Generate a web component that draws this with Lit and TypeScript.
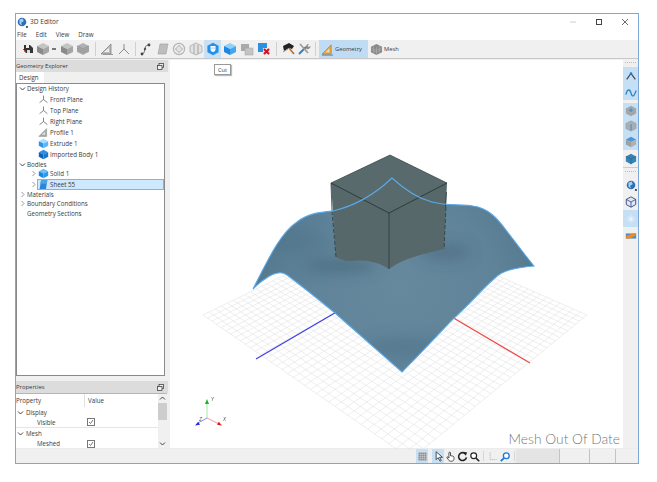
import { LitElement, css, html, svg } from "lit";
import { customElement } from "lit/decorators.js";

// isometric cube used by most of the toolbar icons
const iso = (top: string, left: string, right: string) => svg`
  <polygon points="7,1 13,4 7,7 1,4" fill=${top} />
  <polygon points="1,4 7,7 7,13 1,10" fill=${left} />
  <polygon points="13,4 13,10 7,13 7,7" fill=${right} />
`;

const ICONS: Record<string, unknown> = {
  save: svg`<path d="M3 3h6l3 3v5H5L3 9z" fill="#333"/><rect x="5" y="3" width="3" height="3" fill="#eee"/><rect x="6" y="8" width="3" height="3" fill="#ddd"/><path d="M2 7l3 3" stroke="#c33" stroke-width="1"/>`,
  cubeGrey: iso("#c4c4c4", "#8a8a8a", "#a5a5a5"),
  caret: svg`<rect x="5" y="6" width="4" height="2" fill="#777"/>`,
  stack: svg`<path d="M7 1l6 3v6l-6 3-6-3V4z" fill="#b0b0b0"/><path d="M1 6l6 3 6-3M1 8l6 3 6-3M1 4l6 3 6-3" fill="none" stroke="#858585" stroke-width=".7"/>`,
  ruler: svg`<path d="M1 12L11 2v10z" fill="#bbb" stroke="#777" stroke-width=".7"/><path d="M4 10h5V6z" fill="#eee"/><path d="M3 12.5h10" stroke="#999"/>`,
  axes: svg`<path d="M7 7V2M7 7L2 12M7 7l5 5" fill="none" stroke="#8a8a8a" stroke-width="1"/>`,
  axesDark: svg`<path d="M7 7V2M7 7L2 11M7 7l5 4" fill="none" stroke="#666" stroke-width="1"/>`,
  spline: svg`<path d="M3 12c4 0 1-8 6-9" fill="none" stroke="#666" stroke-width="1"/><circle cx="3" cy="12" r="1.4" fill="#444"/><circle cx="6" cy="7" r="1.2" fill="#555"/><circle cx="10" cy="3" r="1.4" fill="#444"/>`,
  sheet: svg`<path d="M4 2h8l-2 10H2z" fill="#bdbdbd" stroke="#a0a0a0" stroke-width=".6"/>`,
  circle: svg`<path d="M7 2.500l4.500 4.500L7 11.500 2.500 7z" fill="#c4c4c4"/><circle cx="7" cy="7" r="5.6" fill="none" stroke="#b5b5b5" stroke-width="1.200"/><circle cx="7" cy="7" r="2.200" fill="#e2e2e2"/>`,
  box: svg`<path d="M7 1l6 3v6l-6 3-6-3V4z" fill="#e2e2e2" stroke="#aaa" stroke-width=".8"/><path d="M5 2.500v9.500" stroke="#aaa"/><path d="M9 3v9" stroke="#a0a0a0"/>`,
  cut: svg`<path d="M7 .8l5.600 3v6.400L7 13.200 1.400 10.200V3.800z" fill="#2291ee"/><path d="M4.500 4v3.500a2.500 2.500 0 0 0 5 0V4z" fill="#fff"/><circle cx="6" cy="6" r=".6" fill="#2291ee"/><circle cx="8" cy="6" r=".6" fill="#2291ee"/>`,
  blueCube: iso("#8fd0fa", "#1b87e6", "#45a6ee"),
  squares: svg`<rect x="1" y="2" width="8" height="7" fill="#aaa"/><rect x="5" y="6" width="8" height="7" fill="#c4c4c4" stroke="#a0a0a0" stroke-width=".5"/>`,
  blueRed: svg`<rect x="1" y="1" width="9" height="9" fill="#2a90e0"/><rect x="6" y="6" width="7" height="7" fill="#dce9f5"/><path d="M7 7l5 5M12 7l-5 5" stroke="#d3101c" stroke-width="2"/>`,
  hammer: svg`<path d="M2 4l6-3 5 3-2 3-3-1-5 3z" fill="#222"/><path d="M8 6l5 6" stroke="#b36a1c" stroke-width="1.400"/><path d="M2 10l5-3" stroke="#999"/>`,
  tools: svg`<path d="M2 12l7-7" stroke="#3c7fc0" stroke-width="2"/><path d="M9 6a3 3 0 0 1 3-4l-1.500 2 1 1 2-1a3 3 0 0 1-4 3z" fill="#8a8a8a"/><path d="M3 2l8 9" stroke="#999" stroke-width="1.600"/>`,
  geometry: svg`<path d="M1 12L11 2v10z" fill="#e9a63c" stroke="#c27a16" stroke-width=".7"/><path d="M5 10h4V6z" fill="#cfe4f7"/><path d="M1 13h12" stroke="#3c7fc0"/>`,
  mesh: svg`<path d="M7 1l6 3v6l-6 3-6-3V4z" fill="#888"/><path d="M1 7l6 3 6-3M1 5l6 3 6-3M4 2.500v9M10 2.500v9M7 4v9" fill="none" stroke="#bbb" stroke-width=".5"/>`,
  extrude: iso("#a8dcfc", "#2a95ea", "#5fb5f2"),
  imported: iso("#2f8fe0", "#0f62b8", "#1877cc"),
  solid: iso("#6cc0f6", "#1a86e0", "#2d99ea"),
  sheetBlue: svg`<path d="M4 1h8l-2 12H2z" fill="#2a86d8"/><path d="M4 1h8l-1 5H3z" fill="#4da3e6"/>`,
  profile: svg`<path d="M1 12L11 2v10z" fill="#a9a9a9" stroke="#888" stroke-width=".6"/><path d="M5 10h4V6z" fill="#e5e5e5"/>`,
  peak: svg`<path d="M2 11l5-7 5 7" fill="none" stroke="#445" stroke-width="1.400"/><circle cx="7" cy="4" r="1.500" fill="#2a78c8"/>`,
  wave: svg`<path d="M1 9c2-8 5-6 6-2s3 6 6-3" fill="none" stroke="#2f86c4" stroke-width="1.500"/>`,
  hexDot: svg`<path d="M7 1l6 3v6l-6 3-6-3V4z" fill="#a5a5a5"/><circle cx="7" cy="6" r="1.800" fill="#3f97e2"/>`,
  hexLine: svg`<path d="M7 1l6 3v6l-6 3-6-3V4z" fill="#adadad" stroke="#8f8f8f" stroke-width=".5"/><path d="M7 5v7" stroke="#3f97e2" stroke-width="1.500"/>`,
  hexTop: iso("#4a96d8", "#a0a0a0", "#b0b0b0"),
  hexBlue: svg`<path d="M7 1l6 3v6l-6 3-6-3V4z" fill="#2f86bd"/><path d="M1 4l6 3 6-3M7 7v6" fill="none" stroke="#556" stroke-width=".8"/>`,
  globe: svg`<circle cx="7" cy="7" r="5" fill="#2a6fb8"/><path d="M4 4l4-1 1 3-3 2 1 3-3-2z" fill="#a5cdf0"/><path d="M12 12l1.500 1.500" stroke="#222" stroke-width="2"/>`,
  wire: svg`<path d="M7 1l5.500 3v6L7 13l-5.500-3V4z" fill="#dfe8f5" stroke="#2c3e78" stroke-width="1"/><path d="M1.500 4L7 7l5.500-3M7 7v6" fill="none" stroke="#2c3e78" stroke-width=".9"/>`,
  light: svg`<circle cx="7" cy="7" r="2" fill="#eaf4fd"/><path d="M7 2v10M2 7h10M3.500 3.500l7 7M10.500 3.500l-7 7" stroke="#eaf4fd" stroke-width=".8"/>`,
  swatch: svg`<rect x="1" y="4" width="12" height="6" fill="#3d8fdc"/><path d="M1 10V7l8-3h4v2l-7 4z" fill="#f08a1c"/>`,
  grid: svg`<rect x="2" y="2" width="10" height="10" fill="#8c8c8c"/><path d="M4.500 2v10M7 2v10M9.500 2v10M2 4.500h10M2 7h10M2 9.500h10" stroke="#d5d5d5" stroke-width=".6"/>`,
  cursor: svg`<path d="M4 1v10l2.500-2.500L9 13l1.500-1-2.200-4H12z" fill="#fff" stroke="#222" stroke-width="1"/>`,
  hand: svg`<path d="M5 6V2.500a1 1 0 0 1 2 0V6l3 .5c1.500.5 1.500 2 1.500 3 0 2-1 3.500-3 3.500H7c-1.500 0-2-1-3-2.500L2.500 8.500C2 7.500 3.500 7 4 8l1 1z" fill="#fff" stroke="#222" stroke-width="1"/>`,
  rotate: svg`<path d="M11 4a5 5 0 1 0 1 4" fill="none" stroke="#222" stroke-width="2"/><path d="M8 1l5 1-2 4z" fill="#222"/>`,
  zoom: svg`<circle cx="6" cy="6" r="3.700" fill="#fff" stroke="#222" stroke-width="1.500"/><path d="M9 9l4 4" stroke="#222" stroke-width="2"/>`,
  axesFlat: svg`<path d="M3 2v10h9" fill="none" stroke="#aaa" stroke-width="1" stroke-dasharray="2 1"/>`,
  zoomBlue: svg`<circle cx="8" cy="6" r="3.700" fill="#fff" stroke="#1a78d8" stroke-width="1.700"/><path d="M5 9l-4 4" stroke="#1a78d8" stroke-width="2.200"/>`,
};

const icon = (name: string, size = 14) =>
  html`<svg class="icon" width=${size} height=${size} viewBox="0 0 14 14">${ICONS[name]}</svg>`;

const TOOLBAR: [string, number, boolean?][] = [
  ["save", 16], ["cubeGrey", 13], ["caret", 10], ["cubeGrey", 16], ["stack", 16], ["|", 8],
  ["ruler", 16], ["axes", 18], ["|", 4], ["spline", 17], ["sheet", 17], ["circle", 16], ["box", 17],
  ["cut", 17, true], ["blueCube", 17], ["squares", 17], ["blueRed", 17], ["|", 8], ["hammer", 16], ["tools", 16], ["|", 7],
];

const TREE: { label: string; depth: number; icon?: string; open?: boolean; closed?: boolean; short?: boolean; selected?: boolean }[] = [
  { label: "Design History", depth: 0, open: true, short: true },
  { label: "Front Plane", depth: 2, icon: "axesDark" },
  { label: "Top Plane", depth: 2, icon: "axesDark" },
  { label: "Right Plane", depth: 2, icon: "axesDark" },
  { label: "Profile 1", depth: 2, icon: "profile" },
  { label: "Extrude 1", depth: 2, icon: "extrude" },
  { label: "Imported Body 1", depth: 2, icon: "imported" },
  { label: "Bodies", depth: 0, open: true, short: true },
  { label: "Solid 1", depth: 1, icon: "solid", closed: true, short: true },
  { label: "Sheet 55", depth: 1, icon: "sheetBlue", closed: true, selected: true },
  { label: "Materials", depth: 0, closed: true, short: true },
  { label: "Boundary Conditions", depth: 0, closed: true, short: true },
  { label: "Geometry Sections", depth: 0, short: true },
];

const RIGHT_TOP: [string, string][] = [
  ["peak", "on h18"], ["wave", "on h15"], ["-", ""], ["hexDot", "on h15"], ["hexLine", "on h15"], ["hexTop", "on h17"], ["hexBlue", "h17"],
];
const RIGHT_BOTTOM: [string, string][] = [
  ["globe", "h17"], ["wire", "h17"], ["light", "on h17"], ["swatch", "h17"],
];

// floor grid: unit square mapped onto the perspective quad
function gridPath(n: number) {
  const [x0, y0, x1, y1, x2, y2, x3, y3] = [385, 224, 587, 313, 411, 457, 203, 313];
  const dx1 = x1 - x2, dx2 = x3 - x2, sx = x0 - x1 + x2 - x3;
  const dy1 = y1 - y2, dy2 = y3 - y2, sy = y0 - y1 + y2 - y3;
  const den = dx1 * dy2 - dx2 * dy1;
  const g = (sx * dy2 - dx2 * sy) / den, h = (dx1 * sy - sx * dy1) / den;
  const a = x1 - x0 + g * x1, b = x3 - x0 + h * x3, d = y1 - y0 + g * y1, e = y3 - y0 + h * y3;
  const p = (u: number, v: number) => {
    const w = g * u + h * v + 1;
    return `${((a * u + b * v + x0) / w).toFixed(1)} ${((d * u + e * v + y0) / w).toFixed(1)}`;
  };
  let out = "";
  for (let i = 0; i <= n; i++) {
    const t = i / n;
    out += `M${p(t, 0)}L${p(t, 1)}M${p(0, t)}L${p(1, t)}`;
  }
  return out;
}

const SURFACE =
  "M253 287C266 262 279 232 297 220C308 211 322 210 333 209C350 205 372 195 392 176C405 188 420 197 432 200C447 204 462 202 473 204C488 206 497 216 506 228C516 241 525 253 534 264C515 266 503 268 495 276C482 287 472 300 453 317C436 335 420 352 402 370L335 311C318 297 303 285 287 273C280 268 272 272 265 277C260 280 256 284 253 287Z";

@customElement("app-root")
export class AppRoot extends LitElement {
  static styles = css`
    :host {
      display: block;
      width: 657px;
      height: 482px;
      background: #fff;
      font-family: "Open Sans", "Liberation Sans", sans-serif;
      font-size: 6.2px;
      color: #3a3a3a;
      overflow: hidden;
    }
    .page {
      padding: 13px 0 0 15px;
    }
    .window {
      box-sizing: border-box;
      width: 624px;
      height: 451px;
      border: 1px solid #7da7d9;
      display: flex;
      flex-direction: column;
      background: #f0f0f0;
    }
    .icon {
      display: block;
      flex: none;
    }
    .titlebar {
      height: 15px;
      background: #fff;
      display: flex;
      align-items: center;
      padding-left: 0;
      gap: 2px;
      font-size: 6.6px;
    }
    .titlebar .title {
      flex: 1;
    }
    .controls {
      display: flex;
      align-items: center;
    }
    .ctl {
      width: 26px;
      display: flex;
      justify-content: center;
    }
    .menu {
      height: 11px;
      background: #fff;
      display: flex;
      align-items: center;
      padding-left: 1px;
      gap: 9px;
    }
    .toolbar {
      height: 18px;
      background: #f0f0f0;
      border-bottom: 1px solid #c8c8c8;
      display: flex;
      align-items: stretch;
      padding-left: 4px;
    }
    .tb {
      display: flex;
      align-items: center;
      justify-content: center;
    }
    .tb.active {
      background: #c9e0f5;
    }
    .tb-sep {
      display: flex;
      justify-content: center;
    }
    .tb-sep::after {
      content: "";
      width: 1px;
      margin: 2px 0;
      background: #d0d0d0;
    }
    .mode {
      display: flex;
      align-items: center;
      gap: 1px;
      padding: 0 2px;
      font-size: 5.8px;
    }
    .mode.active {
      background: #c0dcf5;
      width: 45px;
    }
    .main {
      flex: 1;
      display: flex;
      min-height: 0;
    }
    .left {
      width: 152px;
      flex: none;
      display: flex;
      flex-direction: column;
      background: #f0f0f0;
    }
    .panel-head {
      height: 12px;
      background: #dcdcdc;
      display: flex;
      align-items: center;
      justify-content: space-between;
      padding-right: 4px;
      margin-top: 1px;
      font-size: 5.9px;
    }
    .tabs {
      height: 11px;
      display: flex;
      align-items: flex-end;
    }
    .tab {
      width: 28px;
      height: 11px;
      background: #fff;
      display: flex;
      align-items: center;
      padding-left: 3px;
      box-sizing: border-box;
    }
    .tree {
      flex: 1;
      margin-right: 3px;
      margin-bottom: 4px;
      background: #fff;
      border: 1px solid #8a8a8a;
      box-sizing: border-box;
    }
    .row {
      height: 11px;
      display: flex;
      align-items: center;
      white-space: nowrap;
    }
    .row.short {
      height: 9.5px;
    }
    .row.d0 {
      padding-left: 1px;
    }
    .row.d1 {
      padding-left: 12px;
    }
    .row.d2 {
      padding-left: 21px;
    }
    .row.sel {
      position: relative;
      background: linear-gradient(#cde8ff, #cde8ff) no-repeat 20px 0 / 127px 100%;
    }
    .row.sel::after {
      content: "";
      position: absolute;
      left: 20px;
      top: 0;
      width: 127px;
      height: 100%;
      box-sizing: border-box;
      border: 1px solid #7db4e0;
    }
    .row span {
      position: relative;
      z-index: 1;
    }
    .chev {
      width: 9px;
      height: 9px;
      flex: none;
    }
    .chev.none {
      visibility: hidden;
    }
    .row .icon + span {
      margin-left: 1px;
    }
    .props {
      height: 55px;
      margin-right: 1px;
      border-top: 1px solid #b5b5b5;
      box-sizing: border-box;
      display: flex;
      background: #fff;
      overflow: hidden;
    }
    .props-table {
      flex: 1;
    }
    .p-row {
      height: 10.5px;
      display: flex;
      align-items: center;
      white-space: nowrap;
    }
    .p-row.head {
      height: 13px;
    }
    .p-row.line {
      border-bottom: 1px solid #e6e6e6;
      box-sizing: border-box;
    }
    .p-name {
      width: 69px;
      flex: none;
      box-sizing: border-box;
    }
    .p-name.head {
      border-right: 1px solid #e0e0e0;
      height: 100%;
      display: flex;
      align-items: center;
    }
    .p-value {
      padding-left: 3px;
    }
    .p-group {
      display: flex;
      align-items: center;
      gap: 1px;
    }
    .p-child {
      padding-left: 21px;
    }
    .check {
      width: 6px;
      height: 6px;
      border: 1px solid #777;
      background: #fff;
      display: block;
      margin-left: 2px;
    }
    .scroll {
      width: 9px;
      flex: none;
      background: #f0f0f0;
      display: flex;
      flex-direction: column;
      align-items: stretch;
    }
    .scroll .thumb {
      height: 17px;
      background: #cdcdcd;
    }
    .scroll .fill {
      flex: 1;
    }
    .view {
      flex: 1;
      position: relative;
      margin-left: 2px;
      margin-top: 1px;
      background: #fff;
      min-width: 0;
    }
    .view svg {
      display: block;
    }
    .stale {
      position: absolute;
      right: 3px;
      bottom: 0;
      font-family: "Lato", "Liberation Sans", sans-serif;
      font-size: 13.8px;
      font-weight: 300;
      color: #777;
      line-height: 18px;
      white-space: nowrap;
    }
    .right {
      width: 15px;
      flex: none;
      background: #f0f0f0;
      display: flex;
      flex-direction: column;
      align-items: stretch;
    }
    .grip {
      height: 4px;
      margin: 3px 2px 1px;
      border-top: 1px dotted #bbb;
      box-sizing: border-box;
      flex: none;
    }
    .rb {
      display: flex;
      align-items: center;
      justify-content: center;
      flex: none;
    }
    .rb.on {
      background: #c5dff5;
    }
    .rb.h15 {
      height: 15px;
    }
    .rb.h17 {
      height: 17px;
    }
    .rb.h18 {
      height: 18px;
    }
    .rb-gap {
      height: 3px;
      flex: none;
    }
    .rb-line {
      height: 1px;
      background: #ccc;
      flex: none;
    }
    .status {
      height: 14px;
      flex: none;
      background: #f0f0f0;
      display: flex;
      align-items: stretch;
      padding-left: 400px;
      border-top: 1px solid #ececec;
    }
    .st {
      width: 12px;
      display: flex;
      align-items: center;
      justify-content: center;
    }
    .st.on {
      background: #c5dff5;
    }
    .st.gap {
      margin-right: 4px;
    }
    .st-sep {
      width: 1px;
      margin: 2px 3px;
      background: #d5d5d5;
    }
    .st-sep.flush {
      margin-right: 1px;
    }
    .st-cell {
      border-right: 1px solid #c4c4c4;
      box-sizing: border-box;
    }
    .st-cell.wide {
      width: 44px;
      background: #e4e4e4;
      margin-right: 3px;
    }
    .st-cell.mid {
      width: 27px;
    }
    .st-cell.rest {
      width: 26px;
    }
    .tooltip {
      position: absolute;
      left: 44px;
      top: 4px;
      height: 9px;
      padding: 0 3px;
      display: flex;
      align-items: center;
      background: #fff;
      border: 1px solid #999;
      box-shadow: 1px 1px 1px #bbb;
      font-size: 5.6px;
    }
  `;

  private chevron(open?: boolean, closed?: boolean) {
    const d = open ? "M2 3.500l2.500 2.500L7 3.500" : "M3.500 2l2.500 2.500L3.500 7";
    return html`<svg class="chev ${open || closed ? "" : "none"}" viewBox="0 0 9 9">
      <path d=${d} fill="none" stroke=${open ? "#444" : "#999"} stroke-width="1" />
    </svg>`;
  }

  private scene() {
    return html`<svg width="452" height="390" viewBox="170 58 452 390">
      <defs>
        <clipPath id="surf"><path d=${SURFACE} /></clipPath>
        <radialGradient id="sg" gradientUnits="userSpaceOnUse" cx="400" cy="285" r="145">
          <stop offset="0" stop-color="#67899d" />
          <stop offset=".65" stop-color="#5f8399" />
          <stop offset="1" stop-color="#547a90" />
        </radialGradient>
        <filter id="soft" x="-40%" y="-40%" width="180%" height="180%"><feGaussianBlur stdDeviation="7" /></filter>
      </defs>
      <path d=${gridPath(36)} fill="none" stroke="#e2e2e2" stroke-width=".6" />
      <line x1="256" y1="357" x2="345" y2="305" stroke="#3d3de8" stroke-width="1.200" />
      <line x1="530" y1="361" x2="445" y2="311" stroke="#f04848" stroke-width="1.200" />
      <path d=${SURFACE} fill="url(#sg)" />
      <g clip-path="url(#surf)" filter="url(#soft)">
        <ellipse cx="340" cy="264" rx="38" ry="6" fill="#3c5b70" opacity=".55" />
        <ellipse cx="445" cy="250" rx="26" ry="8" fill="#3c5b70" opacity=".4" />
        <ellipse cx="300" cy="240" rx="30" ry="14" fill="#4a6c82" opacity=".35" />
        <ellipse cx="405" cy="345" rx="40" ry="10" fill="#476b82" opacity=".4" />
      </g>
      <path d="M390 153L447 181L444 247C425 252 405 255 389 267C375 258 362 258 350 259C344 259 340 257 336 255L331 181Z" fill="#56686a" />
      <path d="M390 153L447 181L389 211L331 181Z" fill="#586a6b" stroke="#3c4a4b" stroke-width=".6" />
      <path d="M331 181L389 211L447 181M389 211V267" fill="none" stroke="#2e3a3b" stroke-width=".8" />
      <path d="M331 181L332 209M446.500 190L445.500 205" fill="none" stroke="#2e3a3b" stroke-width=".8" />
      <path d="M332 209L336 255M446 205L444 247" fill="none" stroke="#2e3a3b" stroke-width=".8" stroke-dasharray="4 2" />
      <path d=${SURFACE} fill="none" stroke="#5aa9ea" stroke-width="1.100" />
      <g fill="none" stroke-width="1">
        <path d="M207 416V402" stroke="#a8e8a8" />
        <path d="M207 416l-9 5" stroke="#8c8ce8" />
        <path d="M207 416l12 6" stroke="#ee9a9a" />
      </g>
      <path d="M207 397l-2 5h4z" fill="#1db31d" />
      <path d="M195 423.500l5-.8-1.800-3z" fill="#2a2ae0" />
      <path d="M222 423.500l-5-.8 1.800-3z" fill="#e01a1a" />
      <g font-size="5.500" font-style="italic" fill="#555">
        <text x="211" y="399">Y</text>
        <text x="199" y="419">Z</text>
        <text x="223" y="419">X</text>
      </g>
    </svg>`;
  }

  render() {
    return html`<div class="page">
      <div class="window">
        <div class="titlebar">
          ${icon("globe", 12)}
          <span class="title">3D Editor</span>
          <div class="controls">
            <div class="ctl"><svg width="8" height="8" viewBox="0 0 8 8"><path d="M1 4h6" stroke="#ccc" /></svg></div>
            <div class="ctl"><svg width="8" height="8" viewBox="0 0 8 8"><rect x="1.500" y="1.500" width="5" height="5" fill="none" stroke="#444" /></svg></div>
            <div class="ctl"><svg width="8" height="8" viewBox="0 0 8 8"><path d="M1 1l6 6M7 1l-6 6" stroke="#444" stroke-width=".8" /></svg></div>
          </div>
        </div>
        <div class="menu"><span>File</span><span>Edit</span><span>View</span><span>Draw</span></div>
        <div class="toolbar">
          ${TOOLBAR.map(([name, w, active]) =>
            name === "|"
              ? html`<div class="tb-sep" style="width:${w}px"></div>`
              : html`<div class="tb ${active ? "active" : ""}" style="width:${w}px">${icon(name)}</div>`
          )}
          <div class="mode active">${icon("geometry", 13)}<span>Geometry</span></div>
          <div class="mode">${icon("mesh", 13)}<span>Mesh</span></div>
        </div>
        <div class="main">
          <div class="left">
            <div class="panel-head"><span>Geometry Explorer</span>${this.dock()}</div>
            <div class="tabs"><div class="tab">Design</div></div>
            <div class="tree">
              ${TREE.map(
                (r) => html`<div class="row d${r.depth} ${r.short ? "short" : ""} ${r.selected ? "sel" : ""}">
                  ${r.depth === 2 ? "" : this.chevron(r.open, r.closed)}
                  ${r.icon ? icon(r.icon, 11) : ""}
                  <span>${r.label}</span>
                </div>`
              )}
            </div>
            <div class="panel-head"><span>Properties</span>${this.dock()}</div>
            <div class="props">
              <div class="props-table">
                <div class="p-row head">
                  <div class="p-name head">Property</div>
                  <div class="p-value">Value</div>
                </div>
                <div class="p-row"><div class="p-group">${this.chevron(true)}<span>Display</span></div></div>
                <div class="p-row line">
                  <div class="p-name p-child">Visible</div>
                  ${this.check()}
                </div>
                <div class="p-row"><div class="p-group">${this.chevron(true)}<span>Mesh</span></div></div>
                <div class="p-row">
                  <div class="p-name p-child">Meshed</div>
                  ${this.check()}
                </div>
              </div>
              <div class="scroll">
                <svg width="9" height="9" viewBox="0 0 9 9"><path d="M2 5.500l2.500-2.500L7 5.500" fill="none" stroke="#444" /></svg>
                <div class="thumb"></div>
                <div class="fill"></div>
                <svg width="9" height="9" viewBox="0 0 9 9"><path d="M2 3.500l2.500 2.500L7 3.500" fill="none" stroke="#444" /></svg>
              </div>
            </div>
          </div>
          <div class="view">
            ${this.scene()}
            <div class="tooltip">Cut</div>
            <div class="stale">Mesh Out Of Date</div>
          </div>
          <div class="right">
            <div class="grip"></div>
            ${RIGHT_TOP.map(([name, cls]) =>
              name === "-"
                ? html`<div class="rb-gap"></div>`
                : html`<div class="rb ${cls}">${icon(name, 12)}</div>`
            )}
            <div class="rb-line"></div>
            <div class="grip"></div>
            ${RIGHT_BOTTOM.map(([name, cls]) => html`<div class="rb ${cls}">${icon(name, 12)}</div>`)}
          </div>
        </div>
        <div class="status">
          <div class="st on gap">${icon("grid", 11)}</div>
          <div class="st on">${icon("cursor", 11)}</div>
          <div class="st">${icon("hand", 11)}</div>
          <div class="st">${icon("rotate", 11)}</div>
          <div class="st">${icon("zoom", 11)}</div>
          <div class="st-sep"></div>
          <div class="st">${icon("axesFlat", 10)}</div>
          <div class="st">${icon("zoomBlue", 11)}</div>
          <div class="st-sep flush"></div>
          <div class="st-cell wide"></div>
          <div class="st-cell mid"></div>
          <div class="st-cell rest"></div>
        </div>
      </div>
    </div>`;
  }

  private dock() {
    return html`<svg width="7" height="7" viewBox="0 0 7 7">
      <rect x="2" y=".5" width="4.500" height="4" fill="#eee" stroke="#444" stroke-width=".8" />
      <rect x=".5" y="2.500" width="4.500" height="4" fill="#eee" stroke="#444" stroke-width=".8" />
    </svg>`;
  }

  private check() {
    return html`<svg class="check" viewBox="0 0 6 6">
      <path d="M1 3l1.500 1.500L5 1" fill="none" stroke="#555" stroke-width=".8" />
    </svg>`;
  }
}
